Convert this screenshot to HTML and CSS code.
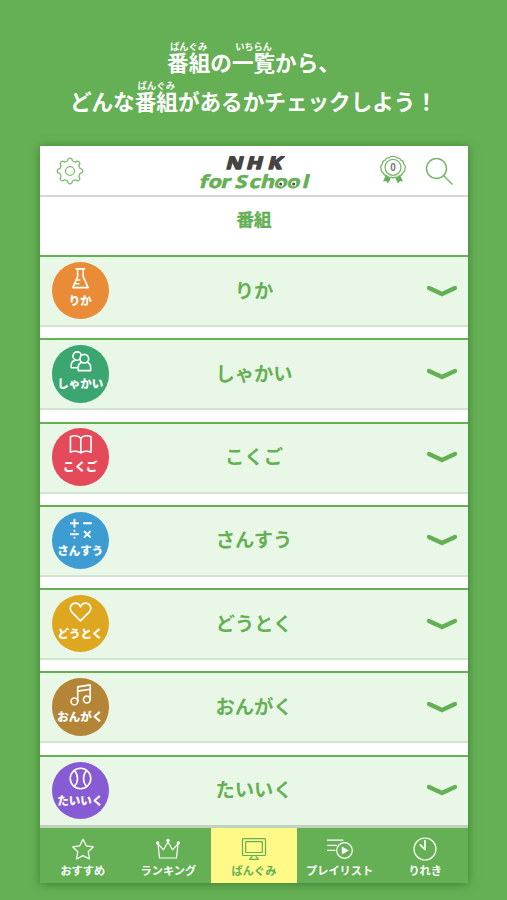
FILE: index.html
```html
<!DOCTYPE html>
<html lang="ja">
<head>
<meta charset="utf-8">
<title>NHK for School</title>
<link rel="stylesheet" href="styles.css">
</head>
<body>
<h1 class="lead">
  <span class="line"><span class="rb">番組<span class="rt">ばんぐみ</span></span>の<span class="rb">一覧<span class="rt">いちらん</span></span>から、</span>
  <span class="line">どんな<span class="rb">番組<span class="rt">ばんぐみ</span></span>があるかチェックしよう！</span>
</h1>
<main class="phone">
  <header class="top">
    <svg class="gear" viewBox="0 0 28 28"><path d="M11.6 4 Q11.8 1.2 14 1.2 Q16.2 1.2 16.4 4 Q18.1 4.5 19.3 5.2 Q21.5 3.400 23.1 4.900 Q24.600 6.500 22.800 8.700 Q23.500 9.900 24 11.600 Q26.800 11.800 26.800 14 Q26.800 16.200 24 16.400 Q23.500 18.100 22.800 19.300 Q24.600 21.500 23.100 23.100 Q21.500 24.600 19.300 22.800 Q18.100 23.500 16.400 24 Q16.200 26.800 14 26.800 Q11.800 26.800 11.600 24 Q9.900 23.500 8.700 22.800 Q6.500 24.600 4.900 23.100 Q3.400 21.500 5.200 19.300 Q4.500 18.100 4 16.400 Q1.200 16.200 1.200 14 Q1.200 11.800 4 11.600 Q4.500 9.900 5.200 8.700 Q3.400 6.500 4.900 4.900 Q6.500 3.400 8.700 5.200 Q9.900 4.500 11.600 4Z"/><circle cx="14" cy="14" r="4.400"/></svg>
    <svg class="logo" viewBox="0 0 120 44">
      <text class="nhk" transform="translate(0 20) skewX(-14) scale(1.22 1)" x="25.600 42.500 60" y="0">NHK</text>
      <text class="school" transform="translate(0 39.300) skewX(-14) scale(1.2 1)" x="3.700 11.200 21.700 29 33.500 45.500 54.700 66 76.600 89.500" y="0">for School</text>
      <g class="eye"><circle cx="87" cy="34.800" r="2.600"/><circle cx="99.700" cy="34.800" r="2.600"/></g>
      <g class="pupil"><circle cx="86.700" cy="35" r="1.500"/><circle cx="99.700" cy="35" r="1.500"/></g>
    </svg>
    <svg class="badge" viewBox="0 0 28 30"><path class="ribbon" d="M7 20 4 26.500l3-.4 2 2.400 3-6zM21 20l3 6.500-3-.4-2 2.400-3-6z"/><path class="rosette" d="M14 1.500Q16.500.7 18 3Q21 2.600 21.900 5.200Q24.800 6 24.600 9Q27.200 11 25.900 13.500Q26.400 16.500 23.900 17.700Q23.200 20.700 20.300 20.700Q18.500 23.200 15.900 22.100L14 22.900L12.100 22.100Q9.500 23.200 7.700 20.700Q4.800 20.700 4.100 17.700Q1.600 16.500 2.100 13.500Q.8 11 3.400 9Q3.200 6 6.100 5.200Q7 2.600 10 3Q11.500.7 14 1.500Z"/><circle class="ring" cx="14" cy="12.300" r="8"/><text x="14" y="15.800" text-anchor="middle">0</text></svg>
    <svg class="search" viewBox="0 0 28 28"><circle cx="11.500" cy="11.500" r="10"/><path d="M18.700 18.700 27 27"/></svg>
  </header>
  <h2 class="title">番組</h2>
  <ul class="list">
    <li class="row"><span class="disc orange"><svg viewBox="0 0 24 24"><path d="M7.500 2h8.800M9 2v8L4 21.500h16L14.800 10V2M7.200 17.500h3M8.800 13.600h2.400"/></svg><b>りか</b></span><span class="name">りか</span><svg class="chev" viewBox="0 0 32 14"><path d="m3 4 13 6 13-6"/></svg></li>
    <li class="row"><span class="disc green"><svg viewBox="0 0 24 24"><circle cx="8.500" cy="6.300" r="4.400"/><path d="M8.500 18.500H2.300v-2.700c0-2.600 1.700-4.500 4-5.200"/><circle class="front" cx="16" cy="9" r="4.500"/><path d="M12.600 13c-2 .9-3 2.500-3 5v3.500h13V18c0-2.500-1-4.100-3-5"/></svg><b>しゃかい</b></span><span class="name">しゃかい</span><svg class="chev" viewBox="0 0 32 14"><path d="m3 4 13 6 13-6"/></svg></li>
    <li class="row"><span class="disc red"><svg viewBox="0 0 24 24"><path d="M12.300 5.500C10 2.300 4.500 2.300 1.500 4v16c3-1.500 8-1.300 10.800.8 2.700-2.100 7.700-2.300 10.700-.8V4c-3-1.700-8.500-1.700-10.700 1.500zv15"/></svg><b>こくご</b></span><span class="name">こくご</span><svg class="chev" viewBox="0 0 32 14"><path d="m3 4 13 6 13-6"/></svg></li>
    <li class="row"><span class="disc blue"><svg class="math" viewBox="0 0 24 24"><path d="M2 6.500h7.400M5.700 2.800v7.400M15.500 6.500H23M2 18h7.400M16.300 15.200l5.600 5.600m0-5.600-5.600 5.600M5.700 14.400v.1M5.700 21.500v.1"/></svg><b>さんすう</b></span><span class="name">さんすう</span><svg class="chev" viewBox="0 0 32 14"><path d="m3 4 13 6 13-6"/></svg></li>
    <li class="row"><span class="disc yellow"><svg viewBox="0 0 24 24"><path d="M12 21.800 3 12.700C-.9 7.700 2.900 3.300 6.600 3.300c2.600 0 4.400 1.500 5.400 3.900 1-2.400 2.800-3.900 5.400-3.900 3.700 0 7.500 4.400 3.600 9.400z"/></svg><b>どうとく</b></span><span class="name">どうとく</span><svg class="chev" viewBox="0 0 32 14"><path d="m3 4 13 6 13-6"/></svg></li>
    <li class="row"><span class="disc brown"><svg viewBox="0 0 24 24"><circle cx="5.600" cy="19.200" r="3.500"/><circle cx="18.600" cy="17.200" r="3.500"/><path d="M9.100 19.200V4l13-2v15.200M9.100 8.500l13-2"/></svg><b>おんがく</b></span><span class="name">おんがく</span><svg class="chev" viewBox="0 0 32 14"><path d="m3 4 13 6 13-6"/></svg></li>
    <li class="row"><span class="disc purple"><svg viewBox="0 0 24 24"><circle cx="12" cy="12" r="10.700"/><path d="M5.500 3.700c4.500 4.500 4.500 12.100 0 16.600M18.500 3.700c-4.500 4.500-4.500 12.100 0 16.600"/></svg><b>たいいく</b></span><span class="name">たいいく</span><svg class="chev" viewBox="0 0 32 14"><path d="m3 4 13 6 13-6"/></svg></li>
  </ul>
  <nav class="tabs">
    <a class="tab"><svg viewBox="0 0 28 24"><path d="m14 2.200 3.200 6.600 7.200 1-5.200 5 1.300 7.200-6.500-3.400L7.500 22l1.300-7.200-5.200-5 7.200-1z"/></svg><span>おすすめ</span></a>
    <a class="tab"><svg viewBox="0 0 28 24"><path d="M4 6.800 5.500 21h17L24 6.800l-5.500 6L14 5l-4.500 7.800z"/><g class="dots"><circle cx="3.700" cy="6" r="1.700"/><circle cx="14" cy="3.500" r="1.700"/><circle cx="24.300" cy="6" r="1.700"/></g></svg><span>ランキング</span></a>
    <a class="tab active"><svg viewBox="0 0 28 24"><rect x="2.500" y="1.700" width="23" height="16.800" rx="1"/><rect x="5.700" y="4.700" width="16.600" height="10.800"/><path d="M12 18.500v1.200l-2.500 2.700h9L16 19.700v-1.200"/></svg><span>ばんぐみ</span></a>
    <a class="tab"><svg viewBox="0 0 28 24"><path d="M1.500 3.200H17M1.500 8.300h9M1.500 13.300h7.500"/><circle cx="18.500" cy="13.500" r="7.800"/><path class="play" d="m15.800 9.500 7 4-7 4z"/></svg><span>プレイリスト</span></a>
    <a class="tab"><svg viewBox="0 0 28 24"><circle cx="14" cy="12" r="11"/><path class="hands" d="M14 3.500V12M9.300 7.800 14 12.500"/></svg><span>りれき</span></a>
  </nav>
</main>
</body>
</html>
```

FILE: styles.css
```css
* { box-sizing: border-box; }
body {
  margin: 0;
  width: 507px;
  height: 900px;
  overflow: hidden;
  background: #65b055;
  font-family: "Noto Sans CJK JP", sans-serif;
  font-weight: 700;
}
svg { display: block; fill: none; stroke-linecap: round; stroke-linejoin: round; }
.lead {
  margin: 0;
  padding-top: 42px;
  height: 146px;
  color: #fff;
  font-size: 21.6px;
  line-height: 39px;
  text-align: center;
  white-space: nowrap;
}
.line { display: block; }
.rb { position: relative; }
.rt {
  position: absolute;
  left: 0;
  right: 0;
  top: -6px;
  font-size: 9.2px;
  line-height: 12px;
  text-align: center;
}
.phone {
  display: flex;
  flex-direction: column;
  width: 428px;
  height: 737px;
  margin-left: 40px;
  overflow: hidden;
  background: #fff;
  box-shadow: 0 1px 9px rgba(20, 80, 15, .5);
}
.top {
  display: flex;
  align-items: flex-start;
  flex: none;
  height: 51px;
  padding-left: 16px;
  border-bottom: 2px solid #d8d8d8;
}
.gear { width: 28px; height: 28px; margin-top: 11px; stroke: #7fbd72; stroke-width: 1.3; }
.logo { width: 120px; height: 44px; margin: 3px 0 0 110px; }
.logo text { font-family: "Open Sans", sans-serif; font-weight: 700; stroke-linejoin: round; }
.nhk { font-size: 17px; fill: #444; stroke: #444; stroke-width: 1.5; }
.school { font-size: 18px; fill: #65b055; stroke: #65b055; stroke-width: .6; }
.eye { fill: #fff; }
.pupil { fill: #444; }
.badge { width: 28px; height: 30px; margin: 9px 0 0 65px; }
.ribbon { fill: #65b055; }
.rosette, .ring { stroke: #77b96a; stroke-width: 1.3; }
.rosette { fill: #fff; }
.badge text { font: 700 10px "Liberation Sans", sans-serif; fill: #777; }
.search { width: 28px; height: 28px; margin: 11px 0 0 18px; stroke: #77b96a; stroke-width: 1.5; }
.title {
  flex: none;
  height: 58px;
  margin: 0;
  color: #65b055;
  font-size: 17.5px;
  line-height: 44px;
  text-align: center;
  -webkit-text-stroke: .4px #65b055;
}
.list {
  display: flex;
  flex-direction: column;
  gap: 11.3px;
  flex: 1;
  min-height: 0;
  margin: 0;
  padding: 0;
  overflow: hidden;
  list-style: none;
}
.row {
  display: grid;
  grid-template-columns: 80px 1fr 80px;
  align-items: center;
  flex: none;
  height: 72px;
  padding-bottom: 1px;
  background: #e9f8e6;
  border-top: 2.500px solid #65b055;
  border-bottom: 2px solid #d2e4cf;
}
.disc {
  display: flex;
  flex-direction: column;
  align-items: center;
  width: 57.500px;
  height: 57.500px;
  margin-left: 11.500px;
  padding-top: 5px;
  border-radius: 50%;
  color: #fff;
}
.disc svg { width: 23px; height: 23px; stroke: #fff; stroke-width: 1.7; }
.disc b { margin-top: 2px; font-size: 11.5px; line-height: 17px; white-space: nowrap; }
.disc .math { stroke-width: 2; }
.orange { background: #e98b37; }
.green { background: #3ba66f; }
.red { background: #e44a59; }
.blue { background: #3d9dd3; }
.yellow { background: #dea720; }
.brown { background: #b58537; }
.purple { background: #875bd4; }
.green .front { fill: #3ba66f; }
.name { padding-bottom: 2px; color: #65b055; font-size: 19.3px; line-height: 28px; text-align: center; }
.chev { width: 32px; height: 14px; margin-left: 38px; stroke: #65b055; stroke-width: 4.3; }
.tabs {
  display: grid;
  grid-template-columns: repeat(5, 1fr);
  flex: none;
  height: 58px;
  border-top: 3px solid #c2d1be;
  background: #65b055;
  color: #fff;
}
.tab { display: flex; flex-direction: column; align-items: center; padding-top: 9px; }
.tab svg { width: 28px; height: 24px; stroke: currentColor; stroke-width: 1.2; }
.tab span { margin-top: 1px; font-size: 11.2px; line-height: 16px; white-space: nowrap; }
.active { background: #fff988; color: #65b055; }
.dots, .play { fill: currentColor; stroke: none; }
.tab .hands { stroke-width: 1.7; }
```
